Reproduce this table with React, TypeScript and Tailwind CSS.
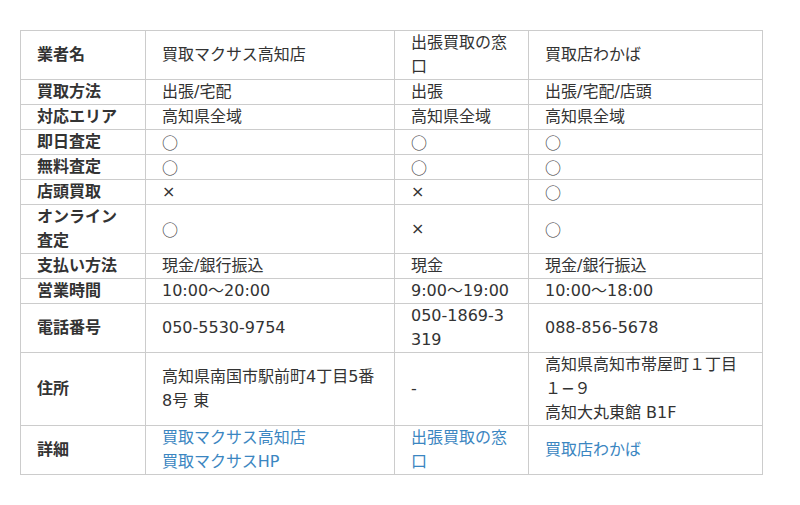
import React from "react";

/* ── data ── */
type Cell = React.ReactNode;

interface Row {
  label: Cell;
  cells: [Cell, Cell, Cell];
}

// full-width circle comes from the CJK font, DejaVu's one is too small
const O = (
  <span
    className="inline-block h-6 leading-6 align-top"
    style={{ fontFamily: '"Noto Sans CJK JP", sans-serif' }}
  >
    ○
  </span>
);
const X = "×";

const Link: React.FC<{ children: React.ReactNode }> = ({ children }) => (
  <a href="#" className="text-[#3b86c1] no-underline">
    {children}
  </a>
);

const rows: Row[] = [
  { label: "買取方法", cells: ["出張/宅配", "出張", "出張/宅配/店頭"] },
  { label: "対応エリア", cells: ["高知県全域", "高知県全域", "高知県全域"] },
  { label: "即日査定", cells: [O, O, O] },
  { label: "無料査定", cells: [O, O, O] },
  { label: "店頭買取", cells: [X, X, O] },
  { label: "オンライン査定", cells: [O, X, O] },
  { label: "支払い方法", cells: ["現金/銀行振込", "現金", "現金/銀行振込"] },
  { label: "営業時間", cells: ["10:00〜20:00", "9:00〜19:00", "10:00〜18:00"] },
  { label: "電話番号", cells: ["050-5530-9754", "050-1869-3319", "088-856-5678"] },
  {
    label: "住所",
    cells: [
      "高知県南国市駅前町4丁目5番8号 東",
      "-",
      <>
        高知県高知市帯屋町１丁目１−９
        <br />
        高知大丸東館 B1F
      </>,
    ],
  },
  {
    label: "詳細",
    cells: [
      <>
        <Link>買取マクサス高知店</Link>
        <br />
        <Link>買取マクサスHP</Link>
      </>,
      <Link>出張買取の窓口</Link>,
      <Link>買取店わかば</Link>,
    ],
  },
];

const td = "border border-[#cccccc] px-4 py-0 align-middle break-all";

export default function App() {
  return (
    <div
      className="w-[800px] h-[505px] bg-white pt-[30px] px-5 text-[16px] leading-6 text-[#333333]"
      style={{ fontFamily: '"DejaVu Sans", "Noto Sans CJK JP", sans-serif' }}
    >
      <table className="w-[742px] table-fixed border-collapse">
        <colgroup>
          <col className="w-[125px]" />
          <col className="w-[249px]" />
          <col className="w-[134px]" />
          <col className="w-[234px]" />
        </colgroup>
        <tbody>
          <tr className="h-[49px]">
            <th className={`${td} text-left font-bold`}>業者名</th>
            <td className={td}>買取マクサス高知店</td>
            <td className={td}>出張買取の窓口</td>
            <td className={td}>買取店わかば</td>
          </tr>
          {rows.map((r, i) => (
            <tr key={i}>
              <th className={`${td} text-left font-bold`}>{r.label}</th>
              {r.cells.map((c, j) => (
                <td key={j} className={td}>
                  {c}
                </td>
              ))}
            </tr>
          ))}
        </tbody>
      </table>
    </div>
  );
}
